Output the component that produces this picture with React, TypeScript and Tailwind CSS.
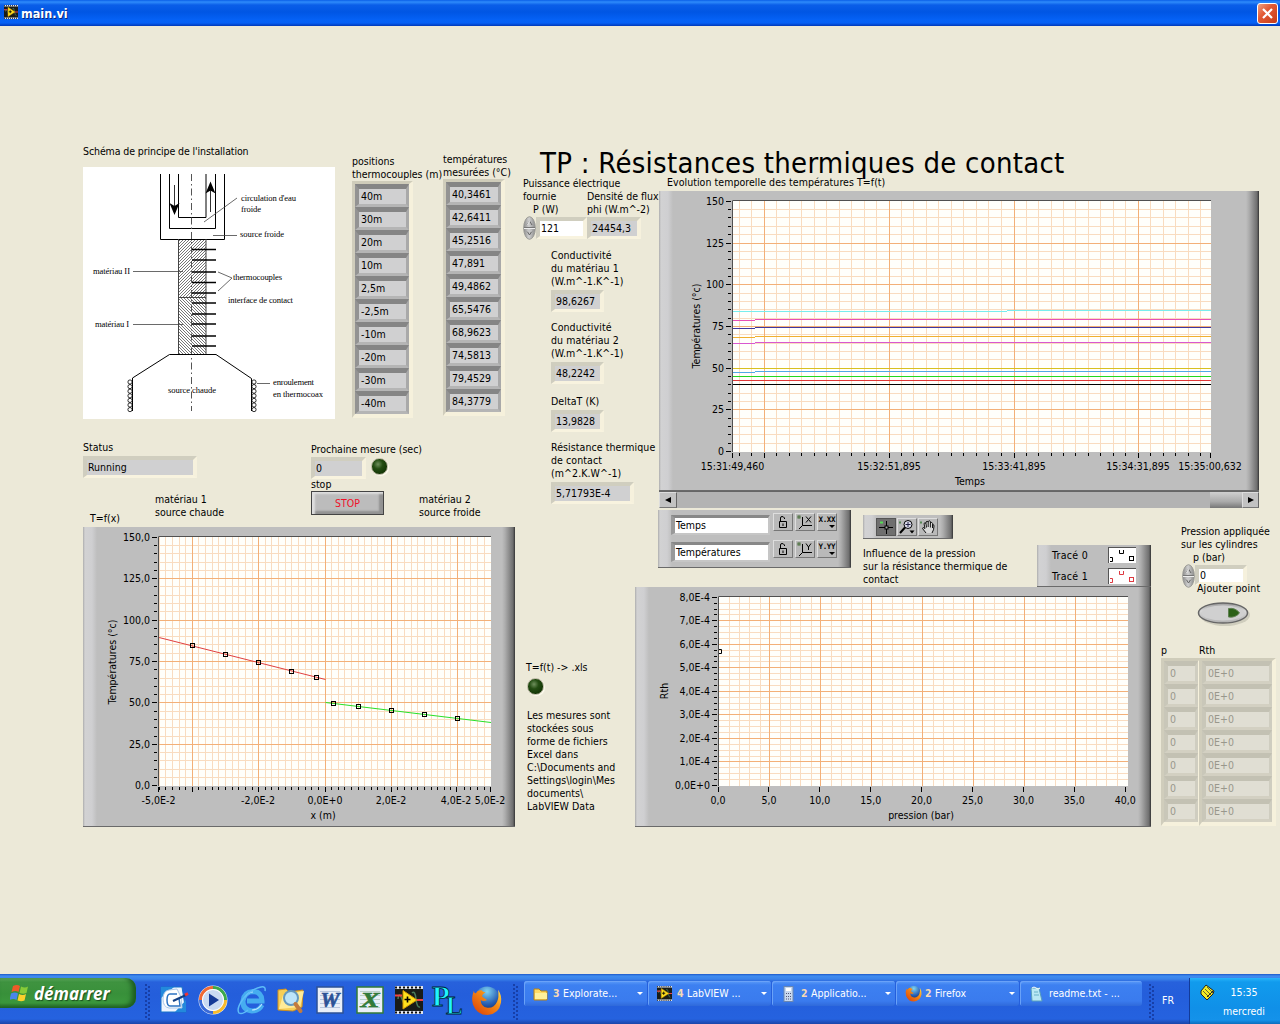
import React from "react";

const PANEL =
  "bg-[linear-gradient(to_right,#adadad_0px,#d2d2d3_2px,#cfcfd1_9px,#bebebe_14px,#bebebe_calc(100%-13px),#adadad_calc(100%-10px),#6e6e6e_calc(100%-2px),#333_100%)] border-b border-[#6a6a6a]";

/* ---------- small pieces ---------- */

function Lines({ lines, className = "" }: { lines: string[]; className?: string }) {
  return (
    <div className={"whitespace-nowrap leading-[13px] " + className}>
      {lines.map((l, i) => (
        <div key={i} className="h-[13px]">{l}</div>
      ))}
    </div>
  );
}

function Field({ value, className = "", white = false }: { value: string; className?: string; white?: boolean }) {
  return (
    <div
      className={
        "flex items-center whitespace-nowrap border-t-[4px] border-r-[4px] border-b-[3px] border-l-[4px] border-t-[#d0cebf] border-r-[#f6f1dd] border-b-[#f8f3df] border-l-[#cfcdbf] pl-px " +
        (white ? "bg-white " : "bg-[#d0d0d1] ") +
        className
      }
    >
      {value}
    </div>
  );
}

function ArrayColumn({ values, className = "", cell }: { values: string[]; className?: string; cell: string }) {
  return (
    <div className={"border-t-[3px] border-r-[4px] border-b-[4px] border-l-[3px] border-t-[#cfccba] border-r-[#f6f1dc] border-b-[#f6f1dc] border-l-[#d0cdbc] bg-[#b2b2b2] " + className}>
      {values.map((v, i) => (
        <div key={i} className={"flex h-[23px] items-center border-t-[5px] border-r-[3px] border-b-[3px] border-l-[4px] bg-[#d0d0d1] pl-[2px] " + cell}>
          {v}
        </div>
      ))}
    </div>
  );
}

function Led({ className = "" }: { className?: string }) {
  return (
    <div className={"size-[17px] rounded-full border border-[#b9b6a2] bg-[radial-gradient(circle_at_40%_35%,#6f8f5c_0,#244d13_35%,#123404_75%)] shadow-[1px_1px_1px_#fffdf0] " + className} />
  );
}

function Spinner({ className = "" }: { className?: string }) {
  return (
    <svg width="13" height="24" viewBox="0 0 13 24" className={"shrink-0 " + className}>
      <defs>
        <linearGradient id="spin" x1="0" x2="1">
          <stop offset="0" stopColor="#8b8b8b" />
          <stop offset=".45" stopColor="#d0d0d0" />
          <stop offset="1" stopColor="#8a8a8a" />
        </linearGradient>
      </defs>
      <ellipse cx="6.5" cy="12" rx="5.8" ry="11.3" fill="url(#spin)" stroke="#9a9a96" />
      <path d="M1 11.5h11" stroke="#777" />
      <path d="M1 12.5h11" stroke="#eee" />
      <path d="M4 9l2.5-4L9 9M4 15l2.5 4L9 15z" fill="none" stroke="#666" />
      <path d="M4.5 9L6.5 5M4 15h5" stroke="#f5f5f5" />
    </svg>
  );
}

/* ---------- charts ---------- */

const range = (n: number) => Array.from({ length: n }, (_, i) => i);
const snap = (v: number) => Math.floor(v) + 0.5;
const MINOR = "#f9dcc0";
const MAJOR = "#f3b078";

type ChartProps = {
  ox: number; oy: number; w: number; h: number;
  plot: [number, number, number, number];
  minorX: number[]; majorX: number[]; minorY: number[]; majorY: number[];
  yLabels: string[]; yLabelPos: number[];
  xLabels: [number, string][]; xLabelY: number;
  xTicks: number[]; xTitle: [number, number, string]; yTitle: [number, number, string];
  children?: React.ReactNode;
};

function Chart(p: ChartProps) {
  const [x0, y0, x1, y1] = p.plot;
  return (
    <svg width={p.w} height={p.h} viewBox={`${p.ox} ${p.oy} ${p.w} ${p.h}`} className="block" fill="#000">
      <rect x={x0} y={y0} width={x1 - x0} height={y1 - y0} fill="#fffffb" />
      <g stroke={MINOR}>
        {p.minorX.map((x) => <path key={x} d={`M${snap(x)} ${y0}V${y1}`} />)}
        {p.minorY.map((y) => <path key={y} d={`M${x0} ${snap(y)}H${x1}`} />)}
      </g>
      <g stroke={MAJOR}>
        {p.majorX.map((x) => <path key={x} d={`M${snap(x)} ${y0}V${y1}`} />)}
        {p.majorY.map((y) => <path key={y} d={`M${x0} ${snap(y)}H${x1}`} />)}
      </g>
      <path d={`M${x0 + 0.5} ${y1}V${y0 + 0.5}H${x1}`} stroke="#505050" fill="none" />
      <g stroke="#000">
        {p.minorY.map((y) => <path key={y} d={`M${x0 - 4} ${snap(y)}h3`} />)}
        {p.yLabelPos.map((y) => <path key={y} d={`M${x0 - 6} ${snap(y)}h5`} />)}
        {p.xTicks.map((x) => <path key={x} d={`M${snap(x)} ${y1 + 1}v3`} />)}
        {p.xLabels.map(([x]) => <path key={x} d={`M${snap(x)} ${y1 + 1}v5`} />)}
      </g>
      {p.yLabels.map((t, i) => (
        <text key={t} x={x0 - 8} y={Math.floor(p.yLabelPos[i]) + 4} textAnchor="end">{t}</text>
      ))}
      {p.xLabels.map(([x, t]) => (
        <text key={t} x={x} y={p.xLabelY} textAnchor="middle">{t}</text>
      ))}
      <text x={p.xTitle[0]} y={p.xTitle[1]} textAnchor="middle">{p.xTitle[2]}</text>
      <text transform={`translate(${p.yTitle[0]} ${p.yTitle[1]}) rotate(-90)`} textAnchor="middle">{p.yTitle[2]}</text>
      {p.children}
    </svg>
  );
}

function TimeChart() {
  const maj = range(7).map((i) => 201.3 + i * 41.7);
  const min = range(30).filter((i) => i % 5).map((i) => 201.3 + i * 8.34);
  const majX = [764, 889, 1014, 1138];
  const minX = range(38).map((i) => 739.3 + i * 12.47).filter((x) => majX.every((m) => Math.abs(m - x) > 4));
  const traces: [string, number, number][] = [
    ["#e850b8", 320, 319], ["#4038a0", 328, 327], ["#f0b030", 337, 336], ["#d858d0", 343, 342],
    ["#d8c020", 368, 368], ["#50a8e8", 372, 371], ["#20d820", 376, 376], ["#e03838", 380, 380], ["#000000", 384, 384],
  ];
  return (
    <Chart
      ox={659} oy={191} w={600} h={299} plot={[732, 200, 1211, 452]}
      minorX={minX} majorX={majX} minorY={min} majorY={maj.slice(1, 6)}
      yLabels={["150", "125", "100", "75", "50", "25", "0"]} yLabelPos={maj}
      xTicks={minX}
      xLabels={[[732.5, "15:31:49,460"], [889, "15:32:51,895"], [1014, "15:33:41,895"], [1138, "15:34:31,895"], [1210, "15:35:00,632"]]}
      xLabelY={470} xTitle={[970, 485, "Temps"]} yTitle={[700, 326, "Températures (°c)"]}
    >
      <path d="M764.5 453v5" stroke="#000" />
      <g shapeRendering="crispEdges">
        <rect x="733" y="311" width="274" height="1" fill="#78eeee" />
        <rect x="1007" y="310" width="204" height="1" fill="#78eeee" />
        {traces.map(([c, a, b]) => (
          <g key={c} fill={c}>
            <rect x="733" y={a} width="22" height="1" />
            <rect x="755" y={b} width="456" height="1" />
          </g>
        ))}
      </g>
    </Chart>
  );
}

function Marker({ x, y }: { x: number; y: number }) {
  return <rect x={x - 2} y={y - 2} width="4" height="4" fill="none" stroke="#000" />;
}

function PositionChart() {
  const maj = range(7).map((i) => 537.3 + i * 41.4);
  const min = range(30).filter((i) => i % 5).map((i) => 537.3 + i * 8.28);
  const minX = range(50).map((i) => 159.2 + i * 6.63).filter((_, i) => i % 10 !== 5);
  const majX = [192, 258, 325, 391, 457];
  return (
    <Chart
      ox={83} oy={527} w={432} h={299} plot={[158, 536, 491, 786]}
      minorX={minX} majorX={majX} minorY={min} majorY={maj.slice(1, 6)}
      yLabels={["150,0", "125,0", "100,0", "75,0", "50,0", "25,0", "0,0"]} yLabelPos={maj}
      xTicks={minX}
      xLabels={[[158.5, "-5,0E-2"], [258, "-2,0E-2"], [325, "0,0E+0"], [391, "2,0E-2"], [456, "4,0E-2"], [490, "5,0E-2"]]}
      xLabelY={804} xTitle={[323, 819, "x (m)"]} yTitle={[116, 662, "Températures (°c)"]}
    >
      <path d="M192.5 787v5" stroke="#000" />
      <path d="M159 637.5L325.5 679.5" stroke="#e04040" />
      <path d="M325.5 702.5L491 722.5" stroke="#28e028" />
      {[[192.5, 645.5], [225.5, 654.5], [258.5, 662.5], [291.5, 671.5], [316.5, 677.5], [333.5, 703.5], [358.5, 706.5], [391.5, 710.5], [424.5, 714.5], [457.5, 718.5]].map(([x, y]) => (
        <Marker key={x} x={x} y={y} />
      ))}
    </Chart>
  );
}

function PressureChart() {
  const maj = range(9).map((i) => 597.3 + i * 23.52);
  const min = range(32).filter((i) => i % 4).map((i) => 597.3 + i * 5.88);
  const minX = range(40).filter((i) => i % 5).map((i) => 719.3 + i * 10.2);
  const pos = range(9).map((i) => 719 + i * 50.9);
  const labels = ["0,0", "5,0", "10,0", "15,0", "20,0", "25,0", "30,0", "35,0", "40,0"];
  return (
    <Chart
      ox={635} oy={587} w={516} h={239} plot={[718, 596, 1128, 786]}
      minorX={minX} majorX={pos.slice(1, 8)} minorY={min} majorY={maj.slice(1, 8)}
      yLabels={["8,0E-4", "7,0E-4", "6,0E-4", "5,0E-4", "4,0E-4", "3,0E-4", "2,0E-4", "1,0E-4", "0,0E+0"]} yLabelPos={maj}
      xTicks={[]} xLabels={labels.map((l, i) => [pos[i] - 1, l] as [number, string])}
      xLabelY={804} xTitle={[921, 819, "pression (bar)"]} yTitle={[668, 691, "Rth"]}
    >
      <path d="M719 649.5h2.500v4h-2.500" fill="none" stroke="#000" />
    </Chart>
  );
}

/* ---------- apparatus drawing ---------- */

function Schematic() {
  return (
    <svg width="252" height="252" viewBox="83 167 252 252" className="block bg-white" fontFamily="'Liberation Serif', serif" fontSize="8.6">
      <defs>
        <pattern id="hatchA" width="3" height="3" patternUnits="userSpaceOnUse">
          <path d="M0 3L3 0" stroke="#666" strokeWidth=".9" />
        </pattern>
        <pattern id="hatchB" width="3" height="3" patternUnits="userSpaceOnUse">
          <path d="M0 0L3 3" stroke="#666" strokeWidth=".9" />
        </pattern>
      </defs>
      <rect x="178" y="239" width="28" height="58" fill="url(#hatchA)" />
      <rect x="178" y="297" width="28" height="58" fill="url(#hatchB)" />
      <g fill="none" stroke="#000">
        <path d="M160.500 174V239.500H224.500V174M169.500 174V228.500H215.500V174M178.500 174V217.500H206V174" />
        <path d="M178.500 239V355M206 239V355" stroke="#444" />
        <path d="M178 297.500h28" stroke="#444" />
        <path d="M191.500 174V411" stroke="#555" strokeDasharray="7 3 1.500 3" />
        <path d="M174.500 185v22M210.500 212v-22" stroke="#333" />
        <path d="M132.500 411V378L169.500 354.500H216L251.500 378.500V411" />
        <g strokeWidth="1.500">
          {[249.500, 260, 272, 282.500, 293, 303, 314, 324, 336, 346].map((y) => <path key={y} d={`M192 ${y}h24`} />)}
        </g>
        <g strokeWidth=".8" stroke="#444">
          <path d="M237 198L204 222M213 235.500h24M133 271.500h50M133 324.500h50M218 272l14 6-14 13M257 383.500h13" />
        </g>
        <g strokeWidth=".8">
          {range(7).map((i) => (
            <g key={i}>
              <circle cx="130" cy={382 + i * 4.600} r="2.100" />
              <circle cx="254" cy={382 + i * 4.600} r="2.100" />
            </g>
          ))}
        </g>
      </g>
      <path d="M169.500 203l5 3 5-3-5 12zM205.500 193.500l5-12 5 12-5-3z" />
      <text x="241" y="201" textLength="55">circulation d'eau</text>
      <text x="241" y="212" textLength="20">froide</text>
      <text x="240" y="237" textLength="44">source froide</text>
      <text x="93" y="274" textLength="37">matériau II</text>
      <text x="95" y="327" textLength="34">matériau I</text>
      <text x="233" y="280" textLength="49">thermocouples</text>
      <text x="228" y="303" textLength="65">interface de contact</text>
      <text x="168" y="393" textLength="48">source chaude</text>
      <text x="273" y="385" textLength="41">enroulement</text>
      <text x="273" y="397" textLength="50">en thermocoax</text>
    </svg>
  );
}

/* ---------- graph tools ---------- */

function Tool({ children, pressed = false }: { children: React.ReactNode; pressed?: boolean }) {
  return (
    <div className={"flex h-[18px] w-[20px] items-center justify-center border " + (pressed ? "border-[#555] bg-[#6f6f6f]" : "border-t-[#dedede] border-r-[#777] border-b-[#777] border-l-[#dedede] bg-[#b9b9b9]")}>
      {children}
    </div>
  );
}

function ScaleRow({ label, axis }: { label: string; axis: string }) {
  return (
    <div className="flex h-[27px] items-start">
      <div className="mt-[2px] flex h-[20px] w-[99px] items-center border-t-[3px] border-r-[2px] border-b-[2px] border-l-[4px] border-t-[#888] border-r-[#c6c6c6] border-b-[#c6c6c6] border-l-[#999] bg-white pl-px">{label}</div>
      <div className="ml-[3px] flex gap-[2px]">
        <Tool>
          <svg width="12" height="14" fill="none" stroke="#000"><path d="M2.500 6.500h7v6h-7zM3.500 6V3q0-1.500 1.500-1.500T7.500 3v1M6 8.500v2.500" /></svg>
        </Tool>
        <Tool>
          <svg width="18" height="16" fill="none" stroke="#000"><path d="M6.500 3v8.500H16M6.500 11.500L3 15" /><rect x="2" y="2" width="2" height="2" stroke="#426a35" />{axis === "X" ? <path d="M10 2.500l5 6M15 2.500l-5 6" /> : <path d="M10 2.500l2.500 3.500L15 2.500M12.500 6v3" />}</svg>
        </Tool>
        <Tool>
          <svg width="18" height="16"><text x="0.5" y="8" fontSize="7.5" fontFamily="'DejaVu Sans Mono'" fontWeight="bold" textLength="17">{axis + "." + axis + axis}</text><path d="M11 11h6l-3 3z" /></svg>
        </Tool>
      </div>
    </div>
  );
}

function GraphPalette() {
  return (
    <div className={"flex h-[24px] w-[90px] items-center pl-[13px] " + PANEL}>
      <Tool pressed>
        <svg width="18" height="16" stroke="#000" fill="none"><path d="M2 8.500h14M9.500 2v13" /><rect x="8" y="7" width="3" height="3" fill="#aaa" /><path d="M3 3.500h3" stroke="#5d5" strokeWidth="2" /></svg>
      </Tool>
      <div className="ml-px"><Tool>
        <svg width="18" height="16" stroke="#000" fill="none"><circle cx="10" cy="5.500" r="4" fill="#dde" /><path d="M7.500 5.500h5M10 3v5" stroke="#224" /><path d="M7 8.500L2 14" strokeWidth="2" /><path d="M11.500 11.500h5l-2.500 3z" fill="#000" stroke="none" /><path d="M1 3.500h2" stroke="#585" strokeWidth="2" /></svg>
      </Tool></div>
      <div className="ml-px"><Tool>
        <svg width="18" height="16" stroke="#000" fill="#d8d8d8" strokeWidth=".9"><path d="M7 14L3.500 9.500q0-2 2.500 0L5 4.500q1-1.500 2 0V3q1.200-1.500 2.200 0v-.5q1-1.500 2.200 0V4q1.500-1.500 2.200.5V6q1.400-1 1.400 1 0 4-2 7M7 4.500l.5 4M9.200 3v5M11.400 4v4.500M13.500 6v3" /><path d="M1 3.500h2" stroke="#585" strokeWidth="2" /></svg>
      </Tool></div>
    </div>
  );
}

function TraceGlyph({ color }: { color: string }) {
  return (
    <svg width="28" height="16" className="border-t border-l border-[#555] bg-white" fill="none" stroke={color}>
      <path d="M1 9.500h2.500v4H1M10.500 2v3.500h4V2" />
      <rect x="20.500" y="8.500" width="4" height="4" />
    </svg>
  );
}

/* ---------- application icons ---------- */

function LabviewIcon({ size }: { size: number }) {
  return (
    <svg width={size} height={size} viewBox="0 0 28 28">
      <rect width="28" height="28" fill="#e0e4ec" />
      <rect x="0" y="3" width="28" height="22" fill="#191c18" />
      <path d="M0 1.500h28M0 26.500h28" stroke="#111" strokeWidth="2" strokeDasharray="2 2" />
      <path d="M3 13q1-8 4 0t4 8M17 7q3-3 4 6t4 8" fill="none" stroke="#497b59" strokeWidth="1.500" />
      <path d="M0 9.500h7M22 14h6" stroke="#e44" strokeWidth="2" />
      <path d="M8 4.500L22 14 8 23z" fill="#ffe11e" stroke="#d79a00" />
      <path d="M9.500 13.500h6M12.500 10.500v6" stroke="#000" strokeWidth="1.600" />
    </svg>
  );
}

function FirefoxIcon({ size }: { size: number }) {
  return (
    <svg width={size} height={size} viewBox="0 0 32 32">
      <defs>
        <radialGradient id="globe" cx=".5" cy=".2" r=".8"><stop offset="0" stopColor="#7fd4f4" /><stop offset=".6" stopColor="#2a62b5" /><stop offset="1" stopColor="#122a6a" /></radialGradient>
        <linearGradient id="fox" x1="0" y1="1" x2="1" y2="0"><stop offset="0" stopColor="#d83a08" /><stop offset=".6" stopColor="#f68a14" /><stop offset="1" stopColor="#ffe14a" /></linearGradient>
      </defs>
      <circle cx="16.500" cy="14.500" r="13" fill="url(#globe)" />
      <path d="M3 6q-3 7-1 14 4 11 15 11 12-1 14-13 1-7-3-13 1 8-1 12-3 7-10 6.500-7-1-7-8 3 2 6.500 0l-4.500-3q-2-2 3-5-3 0-4-2-4-1-6 3Q3 9 3 6z" fill="url(#fox)" />
    </svg>
  );
}

function OfficeIcon({ letter, color }: { letter: string; color: string }) {
  return (
    <svg width="28" height="28" viewBox="0 0 28 28">
      <rect x="1" y="1" width="26" height="26" fill="#e9eff8" stroke={color} strokeWidth="1.500" />
      <path d="M4 5.500h20M4 9.500h20M4 13.500h20M4 17.500h20M4 21.500h20" stroke={color} opacity=".25" />
      <text x="14" y="21" textAnchor="middle" fontFamily="'Liberation Serif', serif" fontStyle="italic" fontWeight="bold" fontSize="20" fill={color} stroke={color} strokeWidth=".6" textLength="19" lengthAdjust="spacingAndGlyphs">{letter}</text>
    </svg>
  );
}

function QuickLaunch() {
  return (
    <div className="flex h-[34px] items-center">
      <div className="flex w-[39px] justify-center">
        <svg width="30" height="30" viewBox="0 0 30 30"><path d="M2 2h21l4 25H2z" fill="#eef5ff" stroke="#1672c8" /><path d="M2 2h13L2 13zM27 15v12H16z" fill="#2389dc" /><path d="M10 5q-6 1-6 9t6 9h13l-1-11-4-8z" fill="#fff" stroke="#aac8e8" /><path d="M18 9h-7q-3 0-3 6t3 6h10l-1-8" fill="none" stroke="#2c73c2" strokeWidth="1.500" /><path d="M14 16L27 10" stroke="#123e82" strokeWidth="2" /><path d="M26 10l3-1.500" stroke="#e33" strokeWidth="3" /></svg>
      </div>
      <div className="flex w-[39px] justify-center">
        <svg width="30" height="30" viewBox="0 0 30 30" fill="none"><circle cx="15" cy="15" r="14.500" fill="#e8eef8" /><path d="M15 2.500A12.500 12.500 0 0 0 2.500 15" stroke="#f06a35" strokeWidth="3" /><path d="M15 2.500A12.500 12.500 0 0 1 27.500 15" stroke="#3ca84c" strokeWidth="3" /><path d="M27.500 15A12.500 12.500 0 0 1 15 27.500" stroke="#f8bb2d" strokeWidth="3" /><path d="M15 27.500A12.500 12.500 0 0 1 2.500 15" stroke="#3a6ad8" strokeWidth="3" /><circle cx="15" cy="15" r="10.500" fill="#c9daf2" stroke="#fff" /><path d="M11 8.500l10 6.500-10 6.500z" fill="#153a96" /></svg>
      </div>
      <div className="flex w-[39px] justify-center">
        <svg width="30" height="30" viewBox="0 0 30 30" fill="none"><path d="M25 20Q22 26 15 26 5.500 25 6 16 7 7 16 6.500 25 7 25 16H10" stroke="#46adf0" strokeWidth="5" /><path d="M25 19Q21 25 15 25M8 12q3-5 8-5" stroke="#b9e5ff" strokeWidth="1.200" /><path d="M28 6q1-5-4-4Q14 4 6 14-1 24 2 28q3 2 9-3" stroke="#5dbcf8" strokeWidth="1.500" /></svg>
      </div>
      <div className="flex w-[39px] justify-center">
        <svg width="30" height="30" viewBox="0 0 30 30"><path d="M2 25V5l8-1 3 3 14-2-1 17-9 4z" fill="#f7cf58" stroke="#cc8e20" /><path d="M3 24L7 10l21-4-4 16z" fill="#ffeb98" /><circle cx="15" cy="13" r="7" fill="#bce4fa" stroke="#6699bd" strokeWidth="2" /><path d="M19.500 19l5 7" stroke="#c27b3e" strokeWidth="4" strokeLinecap="round" /></svg>
      </div>
      <div className="flex w-[40px] justify-center"><OfficeIcon letter="W" color="#2c5296" /></div>
      <div className="flex w-[39px] justify-center"><OfficeIcon letter="X" color="#327a39" /></div>
      <div className="flex w-[39px] justify-center"><LabviewIcon size={28} /></div>
      <div className="flex w-[39px] justify-center">
        <svg width="34" height="36" viewBox="0 0 34 36" fill="#20f4ff" stroke="#001b38" strokeWidth=".8" fontFamily="'Liberation Serif', serif" fontWeight="bold"><text x="1" y="24" fontSize="29">P</text><text x="15" y="32" fontSize="25">L</text></svg>
      </div>
      <div className="flex w-[39px] justify-center"><FirefoxIcon size={31} /></div>
    </div>
  );
}

function Task({ icon, count, label, arrow = true, width = "w-[123px]" }: { icon: React.ReactNode; count?: string; label: string; arrow?: boolean; width?: string }) {
  return (
    <div className={"mr-px flex h-[25px] shrink-0 items-center rounded-[3px] bg-[linear-gradient(#5c9cf8_0,#3d80f1_4px,#3a7bee_20px,#2f69da_100%)] pl-[9px] text-white shadow-[inset_1px_1px_0_#6aa2f8] " + width}>
      <span className="flex w-[17px] shrink-0 items-center">{icon}</span>
      {count && <span className="ml-[3px] w-[10px] font-bold text-[#f6d9b5]">{count}</span>}
      <span className={"whitespace-nowrap " + (count ? "" : "ml-[3px]")}>{label}</span>
      {arrow && <span className="mr-[4px] ml-auto border-x-[3px] border-t-[3px] border-x-transparent border-t-white" />}
    </div>
  );
}

function Grip() {
  return (
    <svg width="8" height="38" className="shrink-0">
      {range(9).map((i) => (
        <g key={i} fill="#173fa8"><rect x="1" y={1 + i * 4} width="2" height="2" /><rect x="4" y={3 + i * 4} width="2" height="2" /></g>
      ))}
    </svg>
  );
}

function Taskbar() {
  return (
    <footer className="flex h-[50px] items-start bg-[linear-gradient(#1c58c8_0,#3f8cf0_2px,#3a83ea_5px,#2761dc_8px,#245edb_20px,#2562df_45px,#1a45a8_100%)]">
      <div className="mt-[4px] flex h-[30px] w-[136px] items-center rounded-r-[10px] bg-[linear-gradient(#66b265_0,#3f9340_4px,#38903a_16px,#3c983d_25px,#286f2b_100%)] pl-[10px] shadow-[inset_-4px_-1px_5px_#1c5b20]">
        <svg width="19" height="18" viewBox="0 0 19 18"><path d="M3 2q4-2 7 0L8.500 8q-3-2-7 0z" fill="#ee5a28" /><path d="M11 2.500q4 2 7 0L16.500 9q-3 1.500-7 0z" fill="#87cb38" /><path d="M1 9.500q4-2 7 0L6.500 16q-3-2-7 0z" fill="#4a86ea" /><path d="M9 10q4 2 7 0l-1.500 6.500q-3 1.500-7 0z" fill="#fbd02c" /></svg>
        <span className="ml-[5px] font-['Noto_Sans',sans-serif] text-[17px] leading-none font-bold text-white italic [font-stretch:normal] [text-shadow:1px_1px_1px_#1b4d1d]">démarrer</span>
      </div>
      <div className="mt-[9px] ml-[8px]"><Grip /></div>
      <div className="mt-[9px] ml-[2px]"><QuickLaunch /></div>
      <div className="mt-[9px] ml-[6px]"><Grip /></div>
      <div className="mt-[7px] ml-[4px] flex w-[625px]">
        <Task icon={<svg width="16" height="14"><path d="M1 13V2h5l2 2h6v9z" fill="#ffdb65" stroke="#b5821a" /><path d="M2 6h12v6H2z" fill="#fff09c" /></svg>} count="3" label="Explorate..." />
        <Task icon={<LabviewIcon size={15} />} count="4" label="LabVIEW ..." />
        <Task icon={<svg width="14" height="16"><rect x="3" y=".5" width="9" height="15" fill="#c7d8ef" stroke="#6b87b2" /><rect x="5" y="2" width="5" height="3" fill="#fff" /><path d="M5 7.500h6M5 10.500h6M5 13h6" stroke="#557" strokeDasharray="1 1" /></svg>} count="2" label="Applicatio..." />
        <Task icon={<FirefoxIcon size={17} />} count="2" label="Firefox" />
        <Task icon={<svg width="14" height="16"><path d="M2 2h8l3 13H3z" fill="#b9e8f4" stroke="#579ebd" /><path d="M3 2q2-2 4 0t4 0" fill="none" stroke="#fff" /><path d="M5 6h4M5 9h5" stroke="#68b1c8" /></svg>} label="readme.txt - ..." arrow={false} width="w-[122px]" />
      </div>
      <div className="-ml-px mt-[9px]"><Grip /></div>
      <div className="mt-[20px] ml-[6px] w-[27px] text-white">FR</div>
      <div className="mt-[4px] flex h-[46px] flex-1 border-l border-[#123b99] bg-[linear-gradient(#27b5fa_0,#119bed_4px,#1090e8_30px,#1492ea_42px,#0d6dbc_100%)] pl-[9px] text-white">
        <svg width="17" height="17" viewBox="0 0 17 17" className="mt-[6px]"><path d="M2 7l5-6 8 6-1 3-6 6-6-6z" fill="#f4ec24" stroke="#222" /><path d="M4 7l6 6M6 5l6 6M8 3l6 6" stroke="#443" strokeWidth=".8" /><path d="M2 10l6 6M8 13l6-6" stroke="#222" /></svg>
        <div className="relative -left-[2px] ml-[8px] flex w-[44px] flex-col items-center leading-[13px]">
          <span className="mt-[8px]">15:35</span>
          <span className="mt-[6px]">mercredi</span>
        </div>
      </div>
    </footer>
  );
}

/* ---------- front panel sections ---------- */

const POSITIONS = ["40m", "30m", "20m", "10m", "2,5m", "-2,5m", "-10m", "-20m", "-30m", "-40m"];
const TEMPERATURES = ["40,3461", "42,6411", "45,2516", "47,891", "49,4862", "65,5476", "68,9623", "74,5813", "79,4529", "84,3779"];
const DARK_CELL = "border-t-[#858585] border-r-[#a9a9a9] border-b-[#b5b5b5] border-l-[#939393]";
const DIM_CELL = "border-t-[#c3c1b3] border-r-[#cfcdc0] border-b-[#d3d0c2] border-l-[#c9c7b9] !bg-[#e0ded3] text-[#99978c]";

function LeftSection() {
  return (
    <section className="flex w-[440px] shrink-0 flex-col">
      <div className="flex h-[295px] items-start">
        <div className="w-[269px]">
          <Lines lines={["Schéma de principe de l'installation"]} className="tracking-[-0.1px]" />
          <div className="mt-[9px]"><Schematic /></div>
        </div>
        <div className="mt-[10px] w-[91px]">
          <Lines lines={["positions", "thermocouples (m)"]} />
          <ArrayColumn values={POSITIONS} cell={DARK_CELL} className="w-[61px]" />
        </div>
        <div className="mt-[8px]">
          <Lines lines={["températures", "mesurées (°C)"]} />
          <ArrayColumn values={TEMPERATURES} cell={DARK_CELL} className="w-[62px]" />
        </div>
      </div>
      <div className="flex h-[87px] items-start">
        <div className="w-[228px]">
          <Lines lines={["Status"]} className="mt-[1px]" />
          <Field value="Running" className="mt-[2px] h-[22px] w-[114px]" />
          <div className="mt-[15px] flex">
            <Lines lines={["T=f(x)"]} className="mt-[19px] ml-[7px] w-[65px]" />
            <Lines lines={["matériau 1", "source chaude"]} />
          </div>
        </div>
        <div className="w-[108px]">
          <Lines lines={["Prochaine mesure (sec)"]} className="mt-[3px]" />
          <div className="flex">
            <Field value="0" className="mt-[1px] h-[22px] w-[55px]" />
            <Led className="mt-[2px] ml-[5px]" />
          </div>
          <Lines lines={["stop"]} className="-mt-px" />
          <div className="flex h-[24px] w-[73px] items-center justify-center border border-[#444] bg-[#bcbcbc] text-[#f01028] shadow-[inset_3px_2px_2px_#dedede,inset_-4px_-3px_2px_#929292]">STOP</div>
        </div>
        <Lines lines={["matériau 2", "source froide"]} className="mt-[53px]" />
      </div>
      <div className={"w-[432px] " + PANEL}><PositionChart /></div>
    </section>
  );
}

function Readout({ lines, value, className = "", width = "w-[53px]" }: { lines: string[]; value: string; className?: string; width?: string }) {
  return (
    <div className={className}>
      <Lines lines={lines} className="tracking-[0.08px]" />
      <Field value={value} className={"mt-[2px] h-[22px] " + width} />
    </div>
  );
}

function ResultsColumn() {
  return (
    <section className="w-[112px] shrink-0">
      <Lines lines={["Puissance électrique"]} />
      <div className="flex">
        <Lines lines={["fournie"]} className="w-[64px] shrink-0" />
        <Lines lines={["Densité de flux", "phi (W.m^-2)"]} className="shrink-0" />
      </div>
      <Lines lines={["P (W)"]} className="-mt-[13px] ml-[10px] w-[50px]" />
      <div className="flex items-start">
        <Spinner />
        <Field value="121" white className="mt-[1px] h-[22px] w-[51px] shrink-0" />
        <Field value="24454,3" className="mt-[1px] h-[22px] w-[54px] shrink-0" />
      </div>
      <div className="ml-[28px]">
        <Readout className="mt-[9px]" lines={["Conductivité", "du matériau 1", "(W.m^-1.K^-1)"]} value="98,6267" />
        <Readout className="mt-[9px]" lines={["Conductivité", "du matériau 2", "(W.m^-1.K^-1)"]} value="48,2242" />
        <Readout className="mt-[11px]" lines={["DeltaT (K)"]} value="13,9828" />
        <Readout className="mt-[9px]" lines={["Résistance thermique", "de contact", "(m^2.K.W^-1)"]} value="5,71793E-4" width="w-[83px]" />
      </div>
      <Lines lines={["T=f(t) -> .xls"]} className="mt-[157px] ml-[3px]" />
      <Led className="mt-[4px] ml-[4px]" />
      <Lines className="mt-[14px] ml-[4px] tracking-[0.05px]" lines={["Les mesures sont", "stockées sous", "forme de fichiers", "Excel dans", "C:\\Documents and", "Settings\\login\\Mes", "documents\\", "LabVIEW Data"]} />
    </section>
  );
}

function Scrollbar() {
  return (
    <div className="flex h-[17px] w-[600px] border-t border-[#666] bg-[#b3b3b3]">
      <div className="flex w-[18px] items-center justify-center border border-t-[#ddd] border-r-[#666] border-b-[#777] border-l-[#ddd] bg-[#c2c2c2]">
        <span className="border-y-[3px] border-r-[6px] border-y-transparent border-r-black" />
      </div>
      <div className="ml-[533px] w-[32px] bg-[linear-gradient(#d0d0d0,#aaa_60%,#777)]" />
      <div className="flex flex-1 items-center justify-center border border-t-[#ddd] border-r-[#666] border-b-[#777] border-l-[#ddd] bg-[#c2c2c2]">
        <span className="border-y-[3px] border-l-[6px] border-y-transparent border-l-black" />
      </div>
    </div>
  );
}

function RightSection() {
  return (
    <section className="w-[645px] shrink-0">
      <div className="ml-[24px]">
        <Lines lines={["Evolution temporelle des températures T=f(t)"]} className="-mt-px ml-[8px] tracking-[0.05px]" />
        <div className={"mt-[2px] w-[600px] " + PANEL}><TimeChart /></div>
        <Scrollbar />
      </div>
      <div className="flex">
        <div className="w-[516px]">
          <div className="flex h-[79px] items-start">
            <div className={"mt-[2px] ml-[23px] h-[58px] w-[193px] pt-[3px] pl-[13px] " + PANEL}>
              <ScaleRow label="Temps" axis="X" />
              <ScaleRow label="Températures" axis="Y" />
            </div>
            <div className="mt-[7px] ml-[12px] w-[174px]">
              <GraphPalette />
              <Lines className="mt-[8px]" lines={["Influence de la pression", "sur la résistance thermique de", "contact"]} />
            </div>
            <div className={"mt-[37px] flex h-[42px] w-[114px] flex-col gap-[5px] pt-[2px] pl-[15px] " + PANEL}>
              <div className="flex h-[16px] items-center justify-between pr-[15px] tracking-[0.3px]">Tracé 0<TraceGlyph color="#000" /></div>
              <div className="flex h-[16px] items-center justify-between pr-[15px] tracking-[0.3px]">Tracé 1<TraceGlyph color="#dd3940" /></div>
            </div>
          </div>
          <div className={"w-[516px] " + PANEL}><PressureChart /></div>
        </div>
        <div className="ml-[10px]">
          <Lines lines={["Pression appliquée", "sur les cylindres"]} className="mt-[17px] ml-[20px]" />
          <Lines lines={["p (bar)"]} className="ml-[32px]" />
          <div className="ml-[21px] flex items-start">
            <Spinner />
            <Field value="0" white className="mt-[1px] h-[20px] w-[52px]" />
          </div>
          <Lines lines={["Ajouter point"]} className="-mt-[6px] ml-[36px] tracking-[0.15px]" />
          <svg width="58" height="30" className="mt-[3px] ml-[35px] block">
            <defs><linearGradient id="oval" y2="1" x2="0"><stop stopColor="#9d9d9d" /><stop offset=".4" stopColor="#d8d8d8" /><stop offset="1" stopColor="#b0b0b0" /></linearGradient></defs>
            <ellipse cx="29" cy="17" rx="25" ry="11" fill="#bdbaab" opacity=".6" />
            <ellipse cx="27" cy="15" rx="24.500" ry="10" fill="url(#oval)" stroke="#666" strokeWidth="1.500" />
            <ellipse cx="27" cy="15" rx="21.500" ry="7.500" fill="#d0d0d0" />
            <path d="M32.500 10.500q7-1 11 4.500-4 5-11 4z" fill="#2b6117" stroke="#5f8051" />
          </svg>
          <div className="mt-[16px] flex">
            <div className="w-[38px]">
              <Lines lines={["p"]} />
              <ArrayColumn values={["0", "0", "0", "0", "0", "0", "0"]} cell={DIM_CELL} className="mt-[1px] w-[41px] !bg-[#d3d0c2]" />
            </div>
            <div>
              <Lines lines={["Rth"]} />
              <ArrayColumn values={["0E+0", "0E+0", "0E+0", "0E+0", "0E+0", "0E+0", "0E+0"]} cell={DIM_CELL} className="mt-[1px] w-[77px] !bg-[#d3d0c2]" />
            </div>
          </div>
        </div>
      </div>
    </section>
  );
}

export default function App() {
  return (
    <div className="flex h-[1024px] w-[1280px] flex-col overflow-hidden bg-[#ece9d8] font-['DejaVu_Sans_Condensed','DejaVu_Sans',sans-serif] text-[10.5px] leading-[13px] text-black [font-stretch:condensed]">
      <header className="flex h-[26px] shrink-0 items-center bg-[linear-gradient(#0a5fe8_0,#2e8bfb_2px,#0a5ee8_5px,#0056e4_12px,#0562f6_20px,#0660f4_23px,#0038b8_100%)] pl-[4px]">
        <div className="-mt-[2px]"><LabviewIcon size={14} /></div>
        <span className="ml-[3px] text-[12.5px] font-bold text-white [text-shadow:1px_1px_#0a2a80]">main.vi</span>
        <span className="mr-[2px] ml-auto flex size-[21px] items-center justify-center rounded-[3px] border border-white bg-[linear-gradient(135deg,#f0a080,#e25a35_40%,#c63c18)]">
          <svg width="13" height="13" stroke="#fff" strokeWidth="2.200"><path d="M2 2l9 9M11 2l-9 9" /></svg>
        </span>
      </header>
      <main className="flex h-[948px] shrink-0 items-start pt-[119px] pl-[83px]">
        <LeftSection />
        <div className="shrink-0">
          <h1 className="ml-[17px] h-[32px] text-[29px] leading-[36px] tracking-[0.26px] whitespace-nowrap">TP : Résistances thermiques de contact</h1>
          <div className="flex items-start">
            <ResultsColumn />
            <RightSection />
          </div>
        </div>
      </main>
      <Taskbar />
    </div>
  );
}
